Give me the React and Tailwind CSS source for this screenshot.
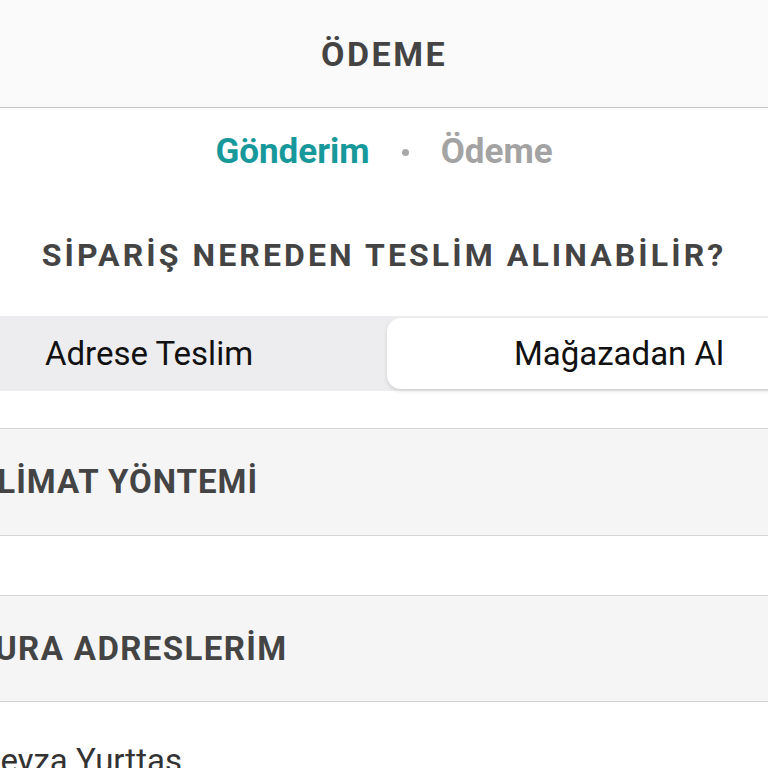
export default function App() {
  return (
    <div className="w-[768px] h-[768px] overflow-hidden bg-white font-['Roboto',sans-serif]">
      <div className="w-[968px] -ml-[100px] flex flex-col">
        <header className="h-[108px] bg-[#fafafa] border-b border-[#c6c6c6] flex items-center justify-center">
          <h1 className="text-[34px] font-bold text-[#444444] tracking-[2.5px] pt-[2px]">ÖDEME</h1>
        </header>
        <div className="h-[86px] flex items-center justify-center gap-[32px] text-[35px] font-bold pt-[2px]">
          <span className="text-[#17999b]">Gönderim</span>
          <span className="w-[7px] h-[7px] rounded-full bg-[#a8a8a8]"></span>
          <span className="text-[#a3a3a3]">Ödeme</span>
        </div>
        <div className="h-[122px] flex items-center justify-center">
          <h2 className="text-[32px] font-bold text-[#444444] tracking-[3.1px]">SİPARİŞ NEREDEN TESLİM ALINABİLİR?</h2>
        </div>
        <div className="mx-[15px] h-[75px] bg-[#ededef] rounded-[16px] p-[2px] flex">
          <button className="flex-1 flex items-center justify-center text-[33px] text-[#111111]">Adrese Teslim</button>
          <button className="flex-1 ml-[6px] flex items-center justify-center text-[33px] text-[#111111] bg-white rounded-[14px] shadow-[0_2px_4px_rgba(0,0,0,0.12)]">Mağazadan Al</button>
        </div>
        <div className="h-[37px]"></div>
        <section className="h-[108px] bg-[#f5f5f5] border-y border-[#d4d4d4] flex items-center pl-[35px]">
          <h3 className="text-[33px] font-bold text-[#444444] tracking-[1px]">TESLİMAT YÖNTEMİ</h3>
        </section>
        <div className="h-[59px]"></div>
        <section className="h-[107px] bg-[#f5f5f5] border-y border-[#d4d4d4] flex items-center pl-[35px]">
          <h3 className="text-[33px] font-bold text-[#444444] tracking-[1.4px]">FATURA ADRESLERİM</h3>
        </section>
        <div className="pl-[80px] pt-[42px]">
          <p className="text-[33px] leading-none text-[#333333]">Beyza Yurttas</p>
        </div>
      </div>
    </div>
  );
}
